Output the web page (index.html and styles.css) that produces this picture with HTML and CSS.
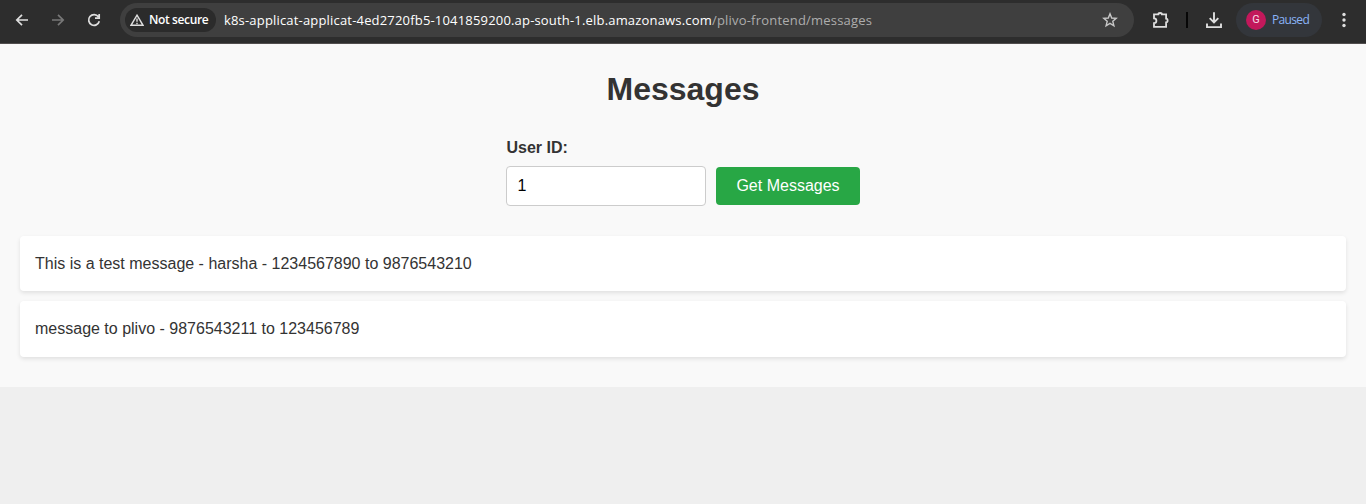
FILE: index.html
```html
<!DOCTYPE html>
<html lang="en">
<head>
<meta charset="utf-8">
<title>Messages</title>
<link rel="stylesheet" href="styles.css">
</head>
<body>
<header class="toolbar">
  <nav class="nav">
    <svg class="icon" width="16" height="16" viewBox="0 0 16 16"><path d="M14 8H3M8 2.8 2.8 8 8 13.2"/></svg>
    <svg class="icon dim" width="16" height="16" viewBox="0 0 16 16"><path d="M2 8h11M8 2.8 13.2 8 8 13.2"/></svg>
    <svg class="icon" width="16" height="16" viewBox="0 0 16 16"><path d="M12.4 4.7A5.4 5.4 0 1 0 13.3 9.3M13.2 2v4.2H9"/></svg>
  </nav>
  <div class="omnibox">
    <div class="chip">
      <svg class="warn" width="14" height="12" viewBox="0 0 14 12"><path d="M7 1.2 13 11.3H1Z"/><path d="M7 4.5v3.3M7 8.8v1.4"/></svg>
      <span class="chip-label">Not secure</span>
    </div>
    <div class="url"><span class="host">k8s-applicat-applicat-4ed2720fb5-1041859200.ap-south-1.elb.amazonaws.com</span><span class="path">/plivo-frontend/messages</span></div>
    <svg class="star" width="16" height="16" viewBox="0 0 16 16"><path d="m8 1.8 1.7 4.2 4.5.4-3.4 2.9 1.1 4.5L8 11.4l-3.9 2.4 1.1-4.5L1.8 6.4 6.3 6Z"/></svg>
  </div>
  <svg class="icon puzzle" width="18" height="18" viewBox="0 0 18 18"><path d="M2 3.4h4.3a1.8 1.4 0 0 1 3.6 0h4.2v4.3a1.5 1.8 0 0 1 0 3.6v4.6H2v-3.7a2.3 2.3 0 0 0 0-4.8Z"/></svg>
  <span class="divider"></span>
  <svg class="icon download" width="18" height="18" viewBox="0 0 18 18"><path d="M9 1.2v10M4.7 7.2 9 11.5l4.3-4.3M2 12.4v3.7h14v-3.7"/></svg>
  <div class="profile"><span class="avatar">G</span><span class="paused">Paused</span></div>
  <svg class="dots" width="4" height="16" viewBox="0 0 4 16"><circle cx="2" cy="2.5" r="1.7"/><circle cx="2" cy="8" r="1.7"/><circle cx="2" cy="13.5" r="1.7"/></svg>
</header>
<main class="page">
  <h1 class="title">Messages</h1>
  <form class="form">
    <label class="label" for="user-id">User ID:</label>
    <div class="row">
      <input class="input" id="user-id" type="text" value="1">
      <button class="button" type="button">Get Messages</button>
    </div>
  </form>
  <ul class="list">
    <li class="card">This is a test message - harsha - 1234567890 to 9876543210</li>
    <li class="card">message to plivo - 9876543211 to 123456789</li>
  </ul>
</main>
</body>
</html>
```

FILE: styles.css
```css
* { box-sizing: border-box; }
body {
  margin: 0;
  background: #efefef;
  color: #333;
  font: 16px/1.6 "Liberation Sans", Arial, sans-serif;
}
.toolbar {
  display: flex;
  align-items: center;
  height: 44px;
  padding: 0 0 4px 14px;
  background: #2d2d2d;
  border-bottom: 1px solid #514e4e;
  font-family: "Open Sans", "Noto Sans", sans-serif;
  white-space: nowrap;
}
.nav { display: flex; gap: 20px; width: 106px; }
.icon { flex: none; fill: none; stroke: #dedede; stroke-width: 1.7; }
.dim { stroke: #777; }
.omnibox {
  display: flex;
  align-items: center;
  width: 1014px;
  height: 34px;
  padding: 0 16px 0 5px;
  border-radius: 17px;
  background: #3f3f3f;
}
.chip {
  display: flex;
  align-items: center;
  width: 91px;
  height: 24px;
  padding-left: 5px;
  gap: 5px;
  border-radius: 12px;
  background: #2b2b2b;
}
.warn { fill: none; stroke: #dedede; stroke-width: 1.4; }
.chip-label { color: #fff; font-size: 12px; font-weight: 600; line-height: 16px; letter-spacing: -0.38px; }
.url { flex: 1; margin-left: 8px; font-size: 13px; line-height: 20px; letter-spacing: 0.18px; }
.host { color: #fff; }
.path { color: #adadad; letter-spacing: 0.2px; }
.star { fill: none; stroke: #c8c8c8; stroke-width: 1.4; }
.puzzle { margin-left: 18px; stroke-width: 1.8; }
.divider { width: 2px; height: 16px; margin-left: 16px; background: #070707; }
.download { margin-left: 17px; stroke-width: 1.9; }
.profile {
  display: flex;
  align-items: center;
  gap: 6px;
  width: 86px;
  height: 34px;
  margin-left: 13px;
  padding-left: 10px;
  border-radius: 17px;
  background: #33363b;
}
.avatar {
  width: 20px;
  height: 20px;
  border-radius: 50%;
  background: #c2185b;
  color: #f5dce6;
  font: 11px/20px Roboto, sans-serif;
  text-align: center;
}
.paused { color: #8ab4f8; font-size: 12px; line-height: 16px; letter-spacing: -0.65px; }
.dots { margin-left: 20px; fill: #dedede; }
.page { height: 343px; padding: 20px; background: #f9f9f9; }
.title { margin: 0 0 20px; font-size: 32px; line-height: 51px; text-align: center; }
.form { width: 354px; margin: 0 auto 29.6px; }
.label { display: block; margin-bottom: 5px; padding-left: 0.5px; font-weight: bold; line-height: 26px; }
.row { display: flex; align-items: center; gap: 10px; }
.input {
  width: 200px;
  height: 40px;
  padding: 10px 10px 10px 10.6px;
  border: 1px solid #ccc;
  border-radius: 4px;
  background: #fff;
  color: #000;
  font: 16px "Liberation Sans", Arial, sans-serif;
}
.button {
  width: 144px;
  height: 38px;
  padding: 0;
  border: 0;
  border-radius: 4px;
  background: #28a745;
  color: #fff;
  font: 16px "Liberation Sans", Arial, sans-serif;
}
.list { margin: 0; padding: 0; list-style: none; }
.card {
  margin-bottom: 10px;
  padding: 15px;
  border-radius: 4px;
  background: #fff;
  box-shadow: 0 2px 4px rgba(0, 0, 0, 0.1);
}
```
